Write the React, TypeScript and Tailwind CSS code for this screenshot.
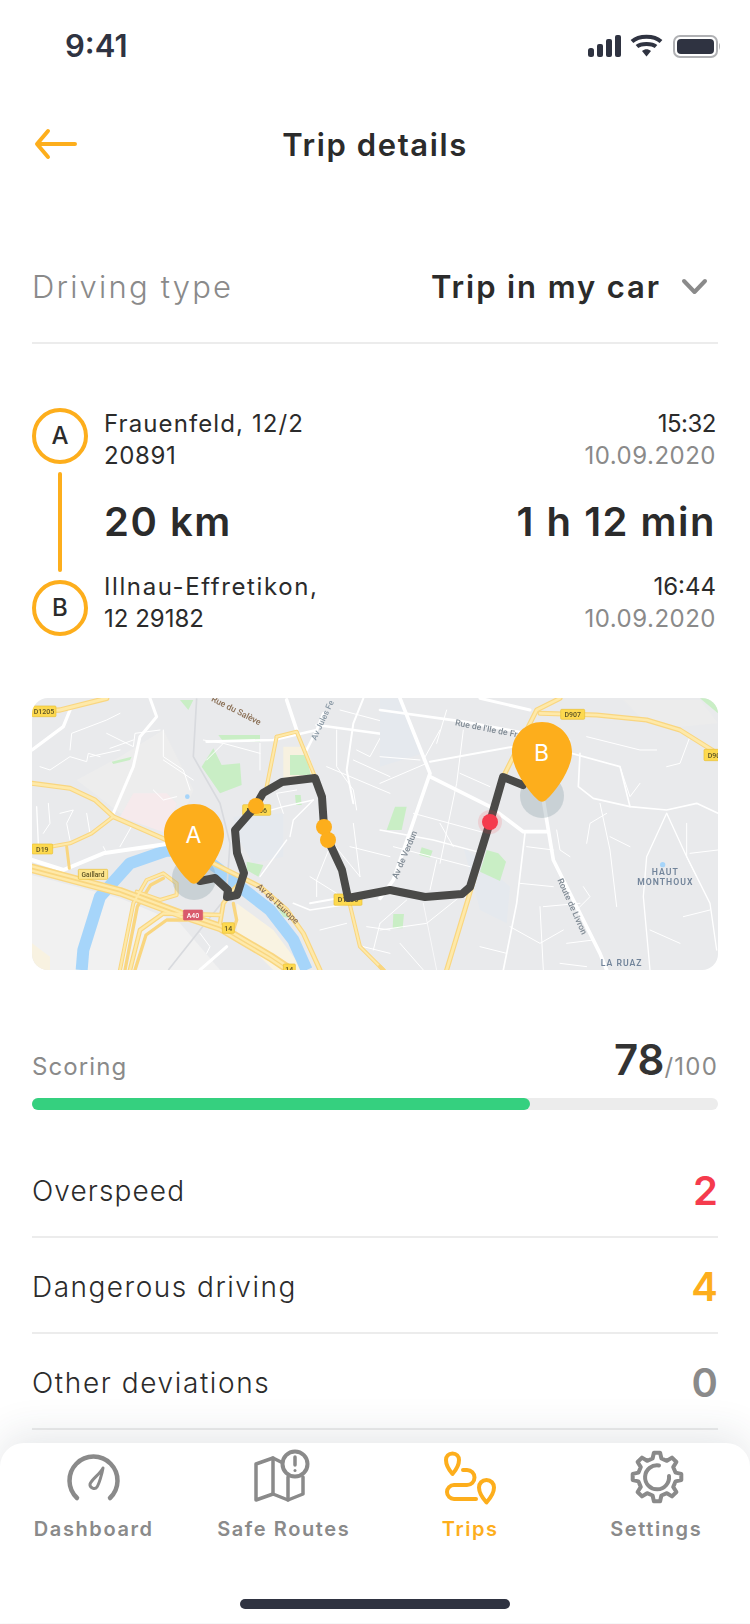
import React from "react";

const ORANGE = "#fdae1c";

function gearPath(cx: number, cy: number, ro: number, ri: number, teeth: number) {
  const pts: string[] = [];
  const step = (Math.PI * 2) / teeth;
  for (let i = 0; i < teeth; i++) {
    const a = i * step - Math.PI / 2;
    const seq: [number, number][] = [
      [a - step * 0.3, ri],
      [a - step * 0.16, ro],
      [a + step * 0.16, ro],
      [a + step * 0.3, ri],
    ];
    seq.forEach(([t, r]) => pts.push(`${(cx + r * Math.cos(t)).toFixed(1)} ${(cy + r * Math.sin(t)).toFixed(1)}`));
  }
  return "M" + pts.join(" L") + "Z";
}

type Road = [string, number];

const Lines = ({ items, color }: { items: Road[]; color: string }) => (
  <>
    {items.map(([p, w], i) => (
      <polyline key={i} points={p} fill="none" stroke={color} strokeWidth={w} strokeLinejoin="round" strokeLinecap="round" />
    ))}
  </>
);

const Label = ({ x, y, r = 0, t, c = "#8a6f55", s = 24, w = 500, ls = 0 }: { x: number; y: number; r?: number; t: string; c?: string; s?: number; w?: number; ls?: number }) => (
  <text transform={`translate(${x} ${y}) rotate(${r})`} fill={c} fontSize={s} fontWeight={w} letterSpacing={ls} fontFamily="Roboto, sans-serif">
    {t}
  </text>
);

const Shield = ({ x, y, w, h, t, fill = "#fdd94f", stroke = "#e8c037", c = "#5c5224", s = 21 }: { x: number; y: number; w: number; h: number; t: string; fill?: string; stroke?: string; c?: string; s?: number }) => (
  <g>
    <rect x={x} y={y} width={w} height={h} rx={3} fill={fill} stroke={stroke} strokeWidth={2} />
    <text x={x + w / 2} y={y + h / 2 + s * 0.36} textAnchor="middle" fontSize={s} fill={c} fontWeight={500} fontFamily="Roboto, sans-serif">
      {t}
    </text>
  </g>
);

const z3Minor: Road[] = [
  ["60,230 90,240 150,200 200,215 205,190 240,200", 3],
  ["150,180 155,130 260,90 300,70", 3],
  ["260,130 340,170 345,130 420,120", 3],
  ["270,175 340,150", 3],
  ["430,120 430,200 490,240 510,300", 3],
  ["210,200 300,180", 3],
  ["430,210 520,270", 3],
  ["400,300 430,330 470,320", 3],
  ["50,350 55,460", 4],
  ["85,340 90,400 70,430", 3],
  ["120,370 160,360 140,400 150,450", 3],
  ["200,370 210,430", 3],
  ["250,470 260,490", 3],
  ["340,400 300,470", 3],
  ["550,150 610,160 720,190", 3],
  ["720,160 720,240", 3],
  ["610,160 560,210", 3],
  ["680,380 790,350 880,330", 4],
  ["790,370 770,310 830,300", 3],
  ["880,330 820,390 810,440", 4],
  ["950,120 950,230 1000,300 1010,360", 3],
  ["1000,210 1110,260", 3],
  ["1010,180 1050,200 1110,90", 3],
  ["960,60 1110,100", 3],
  ["920,230 1110,310", 3],
  ["930,450 1020,560", 3],
  ["930,470 890,570 890,620", 3],
  ["870,560 950,610", 3],
  ["720,560 800,450", 4],
  ["820,640 870,660 1000,640", 5],
  ["1040,710 1110,720", 3],
  ["1030,770 1110,790", 3],
  ["1080,700 1060,780", 3],
  ["900,720 980,700", 3],
  ["540,730 570,770 560,790", 3],
  ["1000,400 1020,560", 3],
  ["1110,500 990,470", 3],
  ["540,840 620,770", 9],
  ["870,640 980,620", 6],
];

const z4Minor: Road[] = [
  ["0,200 120,210", 3],
  ["0,280 140,220", 3],
  ["180,120 130,210", 3],
  ["250,120 230,280 180,520", 3],
  ["200,60 170,160", 3],
  ["240,250 330,290", 3],
  ["0,420 160,450 310,490", 4],
  ["100,370 320,430", 3],
  ["180,400 220,470", 3],
  ["40,470 270,530", 3],
  ["170,510 150,600", 3],
  ["80,630 0,700", 3],
  ["130,640 170,840", 2],
  ["0,720 140,700 240,620", 3],
  ["60,760 130,840", 3],
  ["435,430 410,640 370,840", 5],
  ["390,710 480,760 550,720", 3],
  ["480,650 490,840", 3],
  ["490,650 600,640", 3],
  ["300,770 380,790", 3],
  ["420,580 520,590", 3],
  ["440,470 520,480", 3],
  ["575,190 720,230 750,350 860,360 950,340 1014,370", 5],
  ["600,190 595,290 640,325 750,350", 5],
  ["720,230 750,320 780,280", 3],
  ["660,340 690,480 710,650", 3],
  ["860,370 800,500 790,620 810,840", 4],
  ["860,370 920,500 990,640 1010,780", 4],
  ["920,400 920,500 950,560", 3],
  ["930,490 1014,480", 3],
  ["620,460 630,400 680,370", 3],
  ["530,420 540,480 570,500", 3],
  ["610,590 630,620 590,660", 3],
  ["620,140 780,180 830,180", 3],
  ["690,440 750,470", 3],
  ["810,720 900,760", 3],
  ["910,680 990,660", 3],
  ["500,130 570,150", 3],
  ["930,140 900,220 860,230", 3],
  ["560,760 640,750", 3],
  ["540,820 620,830", 3],
];

function MapView() {
  return (
    <svg viewBox="0 0 686 272" className="block h-full w-full">
      <rect width="686" height="272" fill="#e9eaec" />
      <g transform="translate(-12 -8) scale(0.33333)" className="blur-[0.4px]">
        <polygon points="36,555 300,625 480,700 600,840 36,840" fill="#f1f1f1" />
        <polygon points="170,270 300,200 430,120 520,300 470,430 300,370" fill="#ededed" />
        <polygon points="300,380 340,310 440,310 470,340 440,430" fill="#f6eaec" />
        <polygon points="650,640 760,720 850,840 760,840 650,730" fill="#f9f3e2" />
        <polygon points="36,760 90,800 90,840 36,840" fill="#f8f2e1" />
        <polygon points="640,380 790,370 790,500 700,520 650,440" fill="#e5e9ee" />
        <polygon points="790,170 860,170 885,250 790,280" fill="#f7f1e0" />
        <polygon points="580,175 545,230 600,310 665,285 660,220 605,225" fill="#c9eec5" />
        <polygon points="595,135 720,135 720,155 610,155" fill="#c9eec5" />
        <polygon points="810,195 860,195 872,255 810,255" fill="#c9eec5" />
        <polygon points="825,315 842,315 845,345 828,345" fill="#c9eec5" />
        <polygon points="480,30 520,30 505,60" fill="#c9eec5" />
        <polygon points="275,215 335,200 330,210 280,222" fill="#c9eec5" />
        <polygon points="680,515 730,525 715,560 680,540" fill="#c9eec5" />
        <polygon points="750,620 830,690 790,680" fill="#c9eec5" />
        <circle cx="502" cy="320" r="7" fill="#a6d5fa" />
        <polyline points="185,840 190,780 240,620 330,520 440,482 520,482 600,540 660,590 750,660 820,750 860,840" fill="none" stroke="#a6d5fa" strokeWidth="36" strokeLinejoin="round" />
        <polyline points="530,25 520,200 600,340 630,460 620,600" fill="none" stroke="#d8dade" strokeWidth="5" />
        <polyline points="620,620 540,720 445,840" fill="none" stroke="#d8dade" strokeWidth="5" />
        <Lines color="#ffffff" items={z3Minor} />
        <Lines color="#ffffff" items={[
          ["36,180 130,110 150,60", 10],
          ["390,25 410,80 360,140 340,230 280,370", 9],
          ["36,510 130,540 250,490 440,462", 12],
          ["560,155 760,150 890,120", 8],
          ["800,30 830,120", 11],
          ["860,180 890,120 910,70", 8],
          ["890,105 1110,135", 8],
          ["1030,25 1000,100 980,240 1000,340", 6],
        ]} />
        <Lines color="#f9d680" items={[
          ["36,65 120,60 260,25", 16],
          ["36,280 150,295 225,330 280,380 440,450 600,530 720,590 800,660 850,730 900,840", 15],
          ["36,480 150,460 215,430 280,380", 12],
          ["140,470 148,535", 9],
          ["36,535 300,605 480,672 600,712 750,800 810,840", 28],
          ["300,840 340,640 380,570 430,550 470,580 470,615 420,630 350,605", 12],
          ["315,840 352,650 392,585 430,565", 10],
          ["330,840 360,720 430,670 600,675", 14],
          ["345,840 378,735 440,690 500,690", 10],
          ["600,700 610,640 640,600 670,570", 14],
          ["640,640 650,690 640,720", 10],
          ["740,290 770,140", 12],
          ["770,140 830,125 885,260", 12],
          ["985,625 1020,770 1090,840", 12],
        ]} />
        <Lines color="#fee9a9" items={[
          ["36,65 120,60 260,25", 9],
          ["36,280 150,295 225,330 280,380 440,450 600,530 720,590 800,660 850,730 900,840", 8],
          ["36,480 150,460 215,430 280,380", 6],
          ["36,529 300,599 480,666 600,706 750,794 810,834", 7],
          ["36,542 300,612 480,679 600,719 750,807 810,847", 7],
          ["300,840 340,640 380,570 430,550 470,580 470,615 420,630 350,605", 6],
          ["330,840 360,720 430,670 600,675", 7],
          ["600,700 610,640 640,600 670,570", 6],
          ["740,290 770,140", 6],
          ["770,140 830,125 885,260", 6],
          ["985,625 1020,770 1090,840", 6],
        ]} />
        <Shield x={36} y={48} w={72} h={32} t="D1205" />
        <Shield x={36} y={462} w={62} h={30} t="D19" />
        <Shield x={175} y={538} w={88} h={30} t="Gaillard" fill="#fde58e" s={20} />
        <Shield x={490} y={660} w={58} h={30} t="A40" fill="#d95a6c" stroke="#d95a6c" c="#ffffff" />
        <Shield x={607} y={698} w={36} h={32} t="14" />
        <Shield x={790} y={822} w={36} h={32} t="14" />
        <Shield x={668} y={344} w={84} h={32} t="D1206" />
        <Shield x={942} y={612} w={84} h={34} t="D1205" />
        <Label x={572} y={32} r={27} t="Rue du Salève" s={26} />
        <Label x={888} y={152} r={-65} t="Av Jules Fe" c="#8b9aa6" s={25} />
        <Label x={708} y={592} r={43} t="Av de l'Europe" s={26} />
      </g>
      <g transform="translate(348 -8) scale(0.33333)" className="blur-[0.4px]">
        <polygon points="0,25 60,25 130,190 0,230" fill="#e5e9ee" />
        <polygon points="250,470 390,590 380,700 300,660" fill="#e5e9ee" />
        <polygon points="730,30 960,30 1014,100 900,110 780,80" fill="#ececec" />
        <polygon points="960,25 1014,25 1014,70" fill="#c9eec5" />
        <polygon points="45,350 80,350 65,420 20,420" fill="#c9eec5" />
        <polygon points="125,472 158,482 150,503 118,495" fill="#c9eec5" />
        <polygon points="40,672 72,672 68,715 38,715" fill="#c9eec5" />
        <polygon points="320,480 355,490 378,515 360,573 300,545" fill="#c9eec5" />
        <circle cx="848" cy="524" r="8" fill="#a6d5fa" />
        <Lines color="#ffffff" items={z4Minor} />
        <Lines color="#ffffff" items={[
          ["60,25 150,250 40,570 0,625", 11],
          ["150,260 330,350 430,425 500,425", 11],
          ["490,330 520,510 660,790 680,840", 11],
          ["0,60 250,95 440,130", 8],
          ["150,215 400,170", 6],
          ["300,25 450,60", 9],
          ["0,610 130,620 270,620", 6],
        ]} />
        <Lines color="#f9d680" items={[
          ["200,840 265,625 370,260 470,60 540,25", 15],
          ["480,70 650,75 800,90 900,120 1020,195", 15],
          ["0,830 15,845", 12],
        ]} />
        <Lines color="#fee9a9" items={[
          ["200,840 265,625 370,260 470,60 540,25", 8],
          ["480,70 650,75 800,90 900,120 1020,195", 8],
        ]} />
        <Shield x={542} y={58} w={72} h={30} t="D907" />
        <Shield x={972} y={178} w={60} h={34} t="D90" />
        <Label x={224} y={106} r={11} t="Rue de l'Ile de Fr" c="#7f8a94" s={26} />
        <Label x={52} y={568} r={-67} t="Av de Verdun" c="#7f8a94" s={26} />
        <Label x={532} y={570} r={66} t="Route de Livron" c="#7f8a94" s={26} />
        <text x={856} y={554} textAnchor="middle" fontSize={26} fontWeight={600} letterSpacing={3} fill="#72849a" fontFamily="Roboto, sans-serif">HAUT</text>
        <text x={856} y={586} textAnchor="middle" fontSize={26} fontWeight={600} letterSpacing={3} fill="#72849a" fontFamily="Roboto, sans-serif">MONTHOUX</text>
        <text x={725} y={827} textAnchor="middle" fontSize={26} fontWeight={600} letterSpacing={3} fill="#72849a" fontFamily="Roboto, sans-serif">LA RUAZ</text>
      </g>
      <circle cx="162" cy="180" r="22" fill="#8fa3ad" fillOpacity="0.35" />
      <circle cx="510" cy="98" r="22" fill="#8fa3ad" fillOpacity="0.35" />
      <polyline
        points="168,183 183,180 196,192 195,199 205,197 212,175 205,155 203,132 223,109 231,95 250,84 283,80 290,99 292,129 296,142 310,172 316,200 358,192 393,199 430,196 438,189 458,124 471,79 491,87"
        fill="none" stroke="#4a4a48" strokeWidth="8" strokeLinejoin="round" strokeLinecap="round"
      />
      <circle cx="224" cy="108" r="8" fill={ORANGE} />
      <circle cx="292" cy="129" r="8" fill={ORANGE} />
      <circle cx="296" cy="142" r="8" fill={ORANGE} />
      <circle cx="458" cy="124" r="12" fill="#f53b4d" fillOpacity="0.15" />
      <circle cx="458" cy="124" r="8" fill="#f53b4d" />
      <g transform="translate(132 106)">
        <path d="M30 0C46.5 0 60 13.5 60 30C60 47 44 69 35 77C32 80.500 28 80.500 25 77C16 69 0 47 0 30C0 13.500 13.500 0 30 0Z" fill={ORANGE} />
        <text x="30" y="39" textAnchor="middle" fontSize="23" letterSpacing="1" fill="#fff" fontFamily="Inter, sans-serif">A</text>
      </g>
      <g transform="translate(480 24)">
        <path d="M30 0C46.5 0 60 13.5 60 30C60 47 44 69 35 77C32 80.500 28 80.500 25 77C16 69 0 47 0 30C0 13.500 13.500 0 30 0Z" fill={ORANGE} />
        <text x="30" y="39" textAnchor="middle" fontSize="23" letterSpacing="1" fill="#fff" fontFamily="Inter, sans-serif">B</text>
      </g>
    </svg>
  );
}

const Dashboard = () => (
  <svg width="60" height="56" viewBox="0 0 60 56" fill="none" stroke="#8a8a8a" strokeWidth="4.5" strokeLinecap="round" strokeLinejoin="round">
    <path d="M13 49A24 24 0 1 1 46 49" />
    <path strokeWidth="3" d="M39 19C37 24 27 31 26 35C25.500 39 31 41 33 38C35 35 38 25 39 19Z" />
  </svg>
);

const SafeRoutes = () => (
  <svg width="60" height="56" viewBox="0 0 60 56" fill="none" stroke="#8a8a8a" strokeWidth="3.500" strokeLinejoin="round" strokeLinecap="round">
    <path d="M30 13L22 9L5 15V51L22 45L37 51L52 45V28" />
    <path d="M22 9V45M37 28V51" />
    <circle cx="44" cy="15" r="12.500" strokeWidth="4" />
    <path strokeWidth="3.500" d="M44 8V16" />
    <circle cx="44" cy="21.500" r="1.500" fill="#8a8a8a" stroke="none" />
  </svg>
);

const Trips = () => (
  <svg width="60" height="56" viewBox="0 0 60 56" fill="none" stroke={ORANGE} strokeWidth="4" strokeLinecap="round" strokeLinejoin="round">
    <path d="M13.500 4.500C9.500 4.500 7 7.500 7 11C7 15 10 21 13.500 25C17 21 20 15 20 11C20 7.500 17.500 4.500 13.500 4.500Z" />
    <path d="M47.500 31C43 31 40 34.500 40 38.500C40 43 43.500 49 47.500 53.500C51.500 49 55 43 55 38.500C55 34.500 52 31 47.500 31Z" />
    <path d="M24 21H28A7.500 7.500 0 0 1 28 36H15A7 7 0 0 0 15 50H37" />
  </svg>
);

const Settings = () => (
  <svg width="60" height="56" viewBox="0 0 60 56" fill="none" stroke="#8a8a8a" strokeWidth="4" strokeLinecap="round" strokeLinejoin="round">
    <path d={gearPath(31, 28, 24.500, 19, 8)} />
    <path d="M33 16.500A12 12 0 1 0 43 27" />
  </svg>
);

const Row = ({ label, value, color, track }: { label: string; value: string; color: string; track: string }) => (
  <div className="flex h-[96px] items-center justify-between border-b-2 border-[#ececec] pt-[3px]">
    <span className={`text-[28px] font-light ${track} text-[#2b2b2b]`}>{label}</span>
    <span className={`text-[40px] font-semibold ${color}`}>{value}</span>
  </div>
);

const Tab = ({ icon, label, active, shift }: { icon: React.ReactNode; label: string; active?: boolean; shift?: string }) => (
  <div className="flex flex-col items-center">
    {icon}
    <span className={`mt-[11px] text-[20px] leading-[26px] font-semibold tracking-[1.6px] ${shift ?? ""} ${active ? "text-[#fdae1c]" : "text-[#8a8a8a]"}`}>{label}</span>
  </div>
);

const Circle = ({ t }: { t: string }) => (
  <div className="flex h-[56px] w-[56px] shrink-0 items-center justify-center rounded-full border-[4px] border-[#fdae1c] text-[24px] font-medium text-[#2b2b2b]">{t}</div>
);

export default function App() {
  return (
    <div className="h-[1624px] w-[750px] overflow-hidden bg-white [font-family:Inter,sans-serif] text-[#2b2b2b]">
      <div className="flex h-[88px] items-center justify-between pt-[4px] pr-[30px] pl-[65px]">
        <span className="text-[31px] font-semibold text-[#2f3341]">9:41</span>
        <svg width="134" height="24" viewBox="0 0 134 24" fill="#2f3341">
          <rect x="2" y="14" width="6" height="9" rx="2.500" />
          <rect x="11" y="10" width="6" height="13" rx="2" />
          <rect x="20" y="5" width="6" height="18" rx="2" />
          <rect x="29" y="1" width="6" height="22" rx="2" />
          <path d="M46 7.500C53 1 68 1 75 7.500" fill="none" stroke="#2f3341" strokeWidth="4" />
          <path d="M51 12.500C55 9 66 9 70 12.500" fill="none" stroke="#2f3341" strokeWidth="4" />
          <path d="M56 17C59 14.500 62 14.500 65 17L60.500 22.500Z" />
          <rect x="88" y="2" width="43" height="21" rx="6" fill="none" stroke="#b0b1b4" strokeWidth="2" />
          <rect x="91" y="5" width="37" height="15" rx="4" />
          <path d="M133 9V16C134 15 134.500 10 133 9Z" fill="#b0b1b4" />
        </svg>
      </div>

      <div className="flex h-[112px] items-center justify-between px-[32px]">
        <svg width="48" height="32" viewBox="0 0 48 32" fill="none" stroke="#fdae1c" strokeWidth="4" strokeLinecap="round" strokeLinejoin="round">
          <path d="M6 16H43M16 3L5 16L16 29" />
        </svg>
        <span className="pt-[2px] text-[31px] font-semibold tracking-[1.6px]">Trip details</span>
        <span className="w-[48px]" />
      </div>

      <div className="mt-[32px] px-[32px]">
        <div className="flex h-[112px] items-center justify-between border-b-2 border-[#ececec]">
          <span className="text-[31px] font-light tracking-[2.2px] text-[#8a8a8a]">Driving type</span>
          <div className="flex items-center gap-[20px]">
            <span className="text-[31px] font-semibold tracking-[1.9px]">Trip in my car</span>
            <svg width="28" height="18" viewBox="0 0 28 18" fill="none" stroke="#8a8a8a" strokeWidth="4" strokeLinecap="round" strokeLinejoin="round" className="mr-[9px]">
              <path d="M3 3L13.500 14L24 3" />
            </svg>
          </div>
        </div>
      </div>

      <div className="mt-[64px] pr-[34px] pl-[32px]">
        <div className="flex h-[56px] items-start gap-[16px]">
          <Circle t="A" />
          <div className="flex-1 text-[24px] leading-[32px]">
            <div className="tracking-[1.1px]">Frauenfeld, 12/2</div>
            <div className="tracking-[0.6px]">20891</div>
          </div>
          <div className="text-right text-[24px] leading-[32px]">
            <div className="tracking-[-0.5px]">15:32</div>
            <div className="tracking-[0.5px] text-[#8a8a8a]">10.09.2020</div>
          </div>
        </div>
        <div className="flex h-[116px] gap-[16px]">
          <div className="flex w-[56px] shrink-0 justify-center py-[8px]">
            <div className="w-[4px] rounded-full bg-[#fdae1c]" />
          </div>
          <div className="flex flex-1 items-center justify-between text-[40px] font-semibold tracking-[1.5px]">
            <span>20 km</span>
            <span>1 h 12 min</span>
          </div>
        </div>
        <div className="flex h-[56px] items-start gap-[16px]">
          <Circle t="B" />
          <div className="-mt-[9px] flex-1 text-[24px] leading-[32px]">
            <div className="tracking-[1.6px]">Illnau-Effretikon,</div>
            <div>12 29182</div>
          </div>
          <div className="-mt-[9px] text-right text-[24px] leading-[32px]">
            <div>16:44</div>
            <div className="tracking-[0.5px] text-[#8a8a8a]">10.09.2020</div>
          </div>
        </div>
      </div>

      <div className="mx-[32px] mt-[62px] h-[272px] overflow-hidden rounded-[16px]">
        <MapView />
      </div>

      <div className="mt-[66px] px-[32px]">
        <div className="flex items-baseline justify-between">
          <span className="text-[24px] tracking-[1.1px] text-[#8a8a8a]">Scoring</span>
          <span>
            <span className="text-[42px] leading-[48px] font-semibold text-[#333333]">78</span>
            <span className="text-[24px] tracking-[1.2px] text-[#8a8a8a]">/100</span>
          </span>
        </div>
        <div className="mt-[13px] h-[12px] rounded-full bg-[#ececec]">
          <div className="h-full w-[498px] rounded-full bg-[#35d07f]" />
        </div>
        <div className="mt-[32px]">
          <Row label="Overspeed" value="2" color="text-[#f53b4d]" track="tracking-[1.1px]" />
          <Row label="Dangerous driving" value="4" color="text-[#fdae1c]" track="tracking-[1.5px]" />
          <Row label="Other deviations" value="0" color="text-[#8a8a8a]" track="tracking-[1.6px]" />
        </div>
      </div>

      <div className="relative mt-[13px] h-[180px] rounded-t-[24px] bg-white pt-[6px] shadow-[0_-8px_40px_rgba(40,60,70,0.12)]">
        <div className="grid grid-cols-4">
          <Tab icon={<Dashboard />} label="Dashboard" />
          <Tab icon={<SafeRoutes />} label="Safe Routes" shift="ml-[5px]" />
          <Tab icon={<Trips />} label="Trips" active shift="ml-[3px]" />
          <Tab icon={<Settings />} label="Settings" />
        </div>
        <div className="mx-auto mt-[57px] h-[10px] w-[270px] rounded-full bg-[#2f3341]" />
      </div>
    </div>
  );
}
